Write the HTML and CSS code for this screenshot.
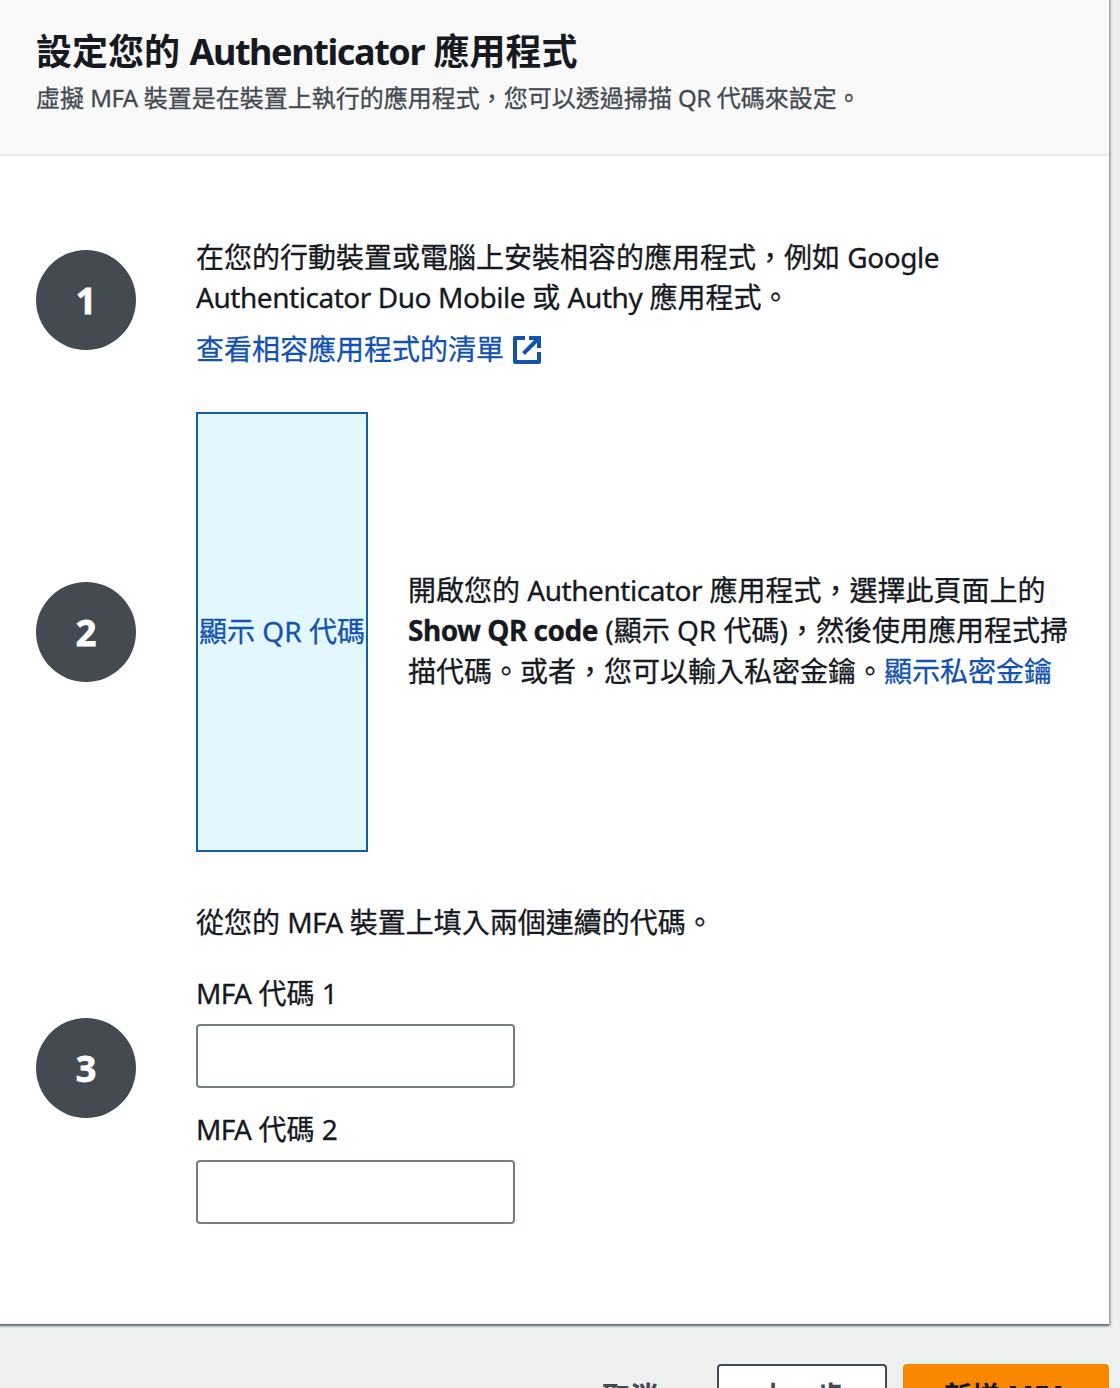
FILE: index.html
```html
<!DOCTYPE html>
<html lang="zh-Hant">
<head>
<meta charset="utf-8">
<title>設定您的 Authenticator 應用程式</title>
<link rel="stylesheet" href="styles.css">
</head>
<body>
<main class="panel">
  <header class="panel-header">
    <h1 class="title">設定您的 <span class="en-title">Authenticator</span> 應用程式</h1>
    <p class="subtitle">虛擬 <span class="en-sub">MFA</span> 裝置是在裝置上執行的應用程式，您可以透過掃描 <span class="en-sub">QR</span> 代碼來設定。</p>
  </header>
  <div class="steps">
    <section class="step step-install">
      <span class="badge">1</span>
      <div class="step-body">
        <p class="line">在您的行動裝置或電腦上安裝相容的應用程式，例如 <span class="en">Google</span></p>
        <p class="line"><span class="en">Authenticator Duo Mobile</span> 或 <span class="en">Authy</span> 應用程式。</p>
        <a class="link external"><span class="external-text">查看相容應用程式的清單</span>
          <svg class="icon" viewBox="0 0 28 28" fill="none" stroke="currentColor" stroke-width="4">
            <path d="M12 2H2v24h24V16" stroke-linejoin="round"/>
            <path d="M16 2h10v10M25 3 10.500 17.500"/>
          </svg>
        </a>
      </div>
    </section>
    <section class="step step-scan">
      <span class="badge">2</span>
      <div class="step-body scan">
        <a class="qr link">顯示 QR 代碼</a>
        <div class="scan-text">
          <p class="line">開啟您的 <span class="en">Authenticator</span> 應用程式，選擇此頁面上的</p>
          <p class="line"><b class="en-bold">Show QR code</b> (顯示 QR 代碼)，然後使用應用程式掃</p>
          <p class="line line-last">描代碼。或者，您可以輸入私密金鑰。<a class="link">顯示私密金鑰</a></p>
        </div>
      </div>
    </section>
    <section class="step step-codes">
      <span class="badge">3</span>
      <div class="step-body codes">
        <p class="line intro">從您的 <span class="en en-caps">MFA</span> 裝置上填入兩個連續的代碼。</p>
        <label class="line" for="code1"><span class="en en-caps">MFA</span> 代碼 1</label>
        <input class="field" id="code1" type="text">
        <label class="line" for="code2"><span class="en en-caps">MFA</span> 代碼 2</label>
        <input class="field" id="code2" type="text">
      </div>
    </section>
  </div>
</main>
<footer class="actions">
  <button class="btn btn-link">取消</button>
  <button class="btn btn-normal">上一步</button>
  <button class="btn btn-primary">新增 MFA</button>
</footer>
</body>
</html>
```
FILE: styles.css
```css
* { box-sizing: border-box; }
html, body { height: 1388px; overflow: hidden; }
body {
  display: flow-root;
  margin: 0;
  background: #eef0f0;
  color: #16191f;
  font: 28px/40px "Noto Sans", "Noto Sans CJK TC", sans-serif;
}
h1, p { margin: 0; }
/* The panel runs past the top and left edges so its shadow has no visible corner there. */
.panel {
  width: 1117px;
  height: 1332px;
  margin: -8px 0 0 -8px;
  padding: 8px 0 0 8px;
  background: linear-gradient(#f9f9f9 100px, #fff 100px);
  box-shadow: 0 2px 2px rgba(0, 28, 36, .5), 2px 2px 2px rgba(0, 28, 36, .25);
}
.panel-header {
  height: 156px;
  padding: 30px 36px 0;
  background: #f9f9f9;
  border-bottom: 2px solid #e8e9e9;
}
.title { font-size: 36px; line-height: 44px; font-weight: 700; white-space: nowrap; }
.en-title { letter-spacing: -1.4px; }
.subtitle {
  margin-top: 6px;
  font-size: 24px;
  line-height: 36px;
  color: #444a52;
  white-space: nowrap;
  -webkit-text-stroke: .3px;
}
.en-sub { letter-spacing: -.6px; }
.en { letter-spacing: -.45px; }
.en-caps { letter-spacing: -.7px; }
.en-bold { letter-spacing: -.5px; }
.steps { padding: 74px 36px 0; }
.step { display: flex; align-items: center; gap: 60px; }
.step-install { height: 140px; }
.step-install .step-body { padding-top: 6px; }
.step-scan { height: 440px; margin-top: 42px; }
.step-codes { height: 332px; margin-top: 50px; }
.badge {
  display: flex;
  align-items: center;
  justify-content: center;
  flex: none;
  width: 100px;
  height: 100px;
  padding-top: 1px;
  border-radius: 50%;
  background: #444a52;
  color: #fff;
  font-size: 36px;
  font-weight: 700;
  -webkit-text-stroke: .8px;
}
.step-body { -webkit-text-stroke: .3px; }
.line { display: block; white-space: nowrap; }
.line-last { padding-top: 1px; }
.link { color: #1452b0; }
.external { display: flex; align-items: center; gap: 9px; margin-top: 12px; }
.icon { width: 28px; height: 28px; margin-top: 1px; }
.scan { display: flex; align-items: center; gap: 40px; }
.scan-text { padding-bottom: 4px; }
.qr {
  display: flex;
  align-items: center;
  justify-content: center;
  width: 172px;
  height: 440px;
  padding-bottom: 2px;
  border: 2px solid #0f5fae;
  background: #e3f7ff;
  white-space: pre;
}
.codes { display: flex; flex-direction: column; padding-bottom: 10px; }
.codes .line { margin-top: -1px; }
.intro { margin-bottom: 32px; }
.field {
  width: 319px;
  height: 64px;
  margin: 11px 0 22px;
  border: 2px solid #728080;
  border-radius: 4px;
  background: #fff;
}
.field:last-child { margin-bottom: 0; }
.actions { display: flex; justify-content: flex-end; width: 1109px; padding-top: 40px; }
.btn {
  height: 64px;
  padding: 0;
  border: 2px solid transparent;
  border-radius: 4px;
  background: none;
  color: #444a52;
  font: inherit;
  font-weight: 700;
}
.btn-link { width: 140px; margin-right: 17px; }
.btn-normal { width: 170px; margin-right: 16px; border-color: #444a52; background: #fff; }
.btn-primary { width: 206px; border-color: #fa8700; background: #fa8700; color: #16191f; }
```
